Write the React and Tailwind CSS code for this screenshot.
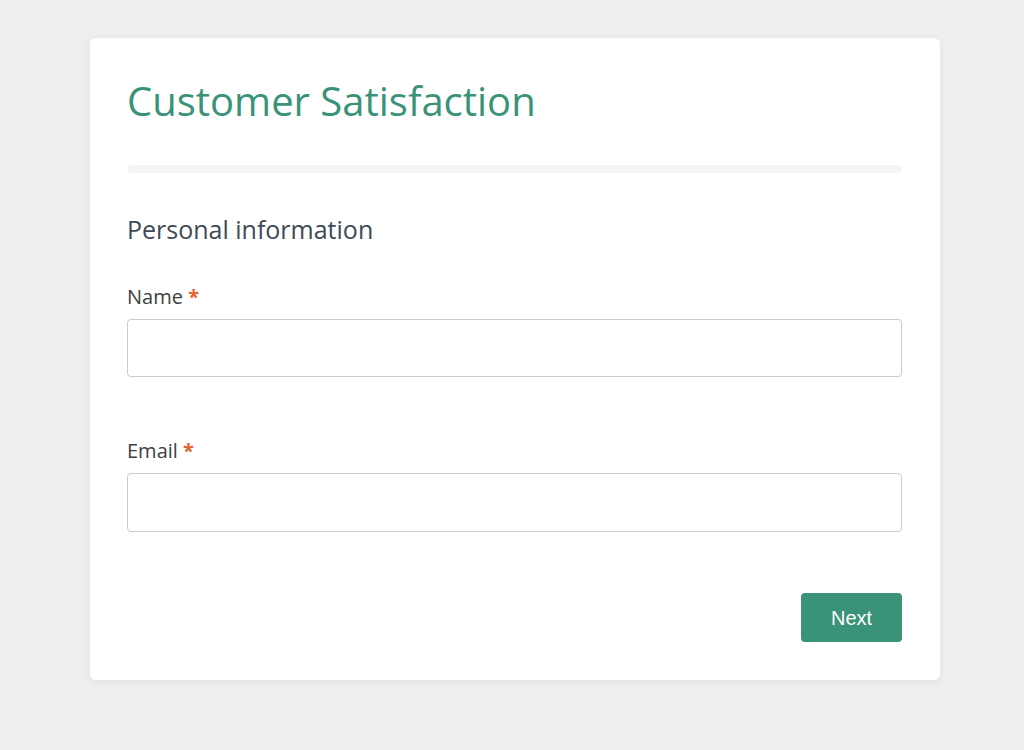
export default function App() {
  return (
    <div className="min-h-[750px] w-full bg-[#eeeeee] pt-[38px]" style={{ fontFamily: '"Open Sans", sans-serif' }}>
      <div className="ml-[90px] w-[850px] h-[642px] bg-white rounded-md shadow-[0_2px_8px_rgba(0,0,0,0.06)] pl-[37px] pr-[38px] pt-[37px]">
        <h1 className="text-[40px] leading-[52px] text-[#3a9279] font-normal">Customer Satisfaction</h1>
        <div className="mt-[38px] h-[8px] rounded-full bg-[#f5f5f5]"></div>
        <h2 className="mt-[40px] text-[25px] leading-[32px] text-[#404a55]">Personal information</h2>
        <div className="mt-[38px]">
          <label className="block text-[20px] leading-[28px] text-[#404040]">
            Name <span className="text-[#e5632e] font-bold">*</span>
          </label>
          <input className="mt-[8px] block w-full h-[58px] rounded-[4px] border border-[#cccccc] outline-none" />
        </div>
        <div className="mt-[60px]">
          <label className="block text-[20px] leading-[28px] text-[#404040]">
            Email <span className="text-[#e5632e] font-bold">*</span>
          </label>
          <input className="mt-[8px] block w-full h-[59px] rounded-[4px] border border-[#cccccc] outline-none" />
        </div>
        <div className="mt-[61px] flex justify-end">
          <button className="w-[101px] h-[49px] rounded-[4px] bg-[#3a9279] text-white text-[20px]" style={{ fontFamily: '"Liberation Sans", Arial, sans-serif' }}>Next</button>
        </div>
      </div>
    </div>
  );
}
